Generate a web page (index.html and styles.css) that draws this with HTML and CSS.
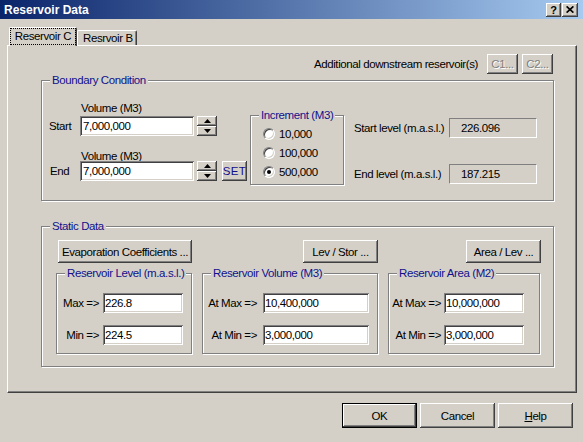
FILE: index.html
```html
<!DOCTYPE html>
<html>
<head>
<meta charset="utf-8">
<title>Reservoir Data</title>
<link rel="stylesheet" href="styles.css">
</head>
<body>
<div class="titlebar">
  <span class="title">Reservoir Data</span>
  <div class="tb-buttons">
    <span class="tb-btn tb-help">?</span>
    <span class="tb-btn tb-close"><svg width="8" height="7" viewBox="0 0 8 7"><path d="M0.6 0.4 L7.4 6.6 M7.4 0.4 L0.6 6.6" stroke="#000" stroke-width="1.7" fill="none"/></svg></span>
  </div>
</div>
<div class="client">
  <div class="tabs">
    <div class="tab active"><span class="focus">Reservoir C</span></div>
    <div class="tab">Resrvoir B</div>
  </div>
  <div class="panel">
    <div class="row-add">
      <span class="add-label">Additional downstream reservoir(s)</span>
      <button class="btn disabled cbtn">C1...</button>
      <button class="btn disabled cbtn">C2...</button>
    </div>

    <div class="group boundary">
      <span class="legend">Boundary Condition</span>
      <div class="bc-body">
        <div class="bc-vol">
          <div class="vol-label first">Volume (M3)</div>
          <div class="field-row">
            <span class="side-label">Start</span>
            <input class="field vol-field" type="text" value="7,000,000">
            <div class="spin">
              <span class="spin-btn"><svg width="7" height="4" viewBox="0 0 7 4"><polygon points="3.5,0 7,4 0,4" fill="#000"/></svg></span>
              <span class="spin-btn"><svg width="7" height="4" viewBox="0 0 7 4"><polygon points="0,0 7,0 3.5,4" fill="#000"/></svg></span>
            </div>
          </div>
          <div class="vol-label second">Volume (M3)</div>
          <div class="field-row end-row">
            <span class="side-label end-label">End</span>
            <input class="field vol-field" type="text" value="7,000,000">
            <div class="spin">
              <span class="spin-btn"><svg width="7" height="4" viewBox="0 0 7 4"><polygon points="3.5,0 7,4 0,4" fill="#000"/></svg></span>
              <span class="spin-btn"><svg width="7" height="4" viewBox="0 0 7 4"><polygon points="0,0 7,0 3.5,4" fill="#000"/></svg></span>
            </div>
            <button class="btn set">SET</button>
          </div>
        </div>

        <div class="group increment">
          <span class="legend">Increment (M3)</span>
          <div class="radios">
            <div class="radio-row"><span class="radio"></span><span>10,000</span></div>
            <div class="radio-row"><span class="radio"></span><span>100,000</span></div>
            <div class="radio-row"><span class="radio checked"></span><span>500,000</span></div>
          </div>
        </div>

        <div class="levels">
          <div class="level-row"><span class="level-label">Start level (m.a.s.l.)</span><div class="static">226.096</div></div>
          <div class="level-row second"><span class="level-label">End level (m.a.s.l.)</span><div class="static">187.215</div></div>
        </div>
      </div>
    </div>

    <div class="group static-data">
      <span class="legend">Static Data</span>
      <div class="sd-buttons">
        <button class="btn evap">Evaporation Coefficients ...</button>
        <button class="btn levstor">Lev / Stor ...</button>
        <button class="btn arealev">Area / Lev ...</button>
      </div>
      <div class="sd-groups">
        <div class="group sub sub-level">
          <span class="legend">Reservoir Level (m.a.s.l.)</span>
          <div class="sub-grid">
            <span class="sub-label">Max =&gt;</span><input class="field" type="text" value="226.8">
            <span class="sub-label">Min =&gt;</span><input class="field" type="text" value="224.5">
          </div>
        </div>
        <div class="group sub sub-volume">
          <span class="legend">Reservoir Volume (M3)</span>
          <div class="sub-grid">
            <span class="sub-label">At Max =&gt;</span><input class="field" type="text" value="10,400,000">
            <span class="sub-label">At Min =&gt;</span><input class="field" type="text" value="3,000,000">
          </div>
        </div>
        <div class="group sub sub-area">
          <span class="legend">Reservoir Area (M2)</span>
          <div class="sub-grid">
            <span class="sub-label">At Max =&gt;</span><input class="field" type="text" value="10,000,000">
            <span class="sub-label">At Min =&gt;</span><input class="field" type="text" value="3,000,000">
          </div>
        </div>
      </div>
    </div>
  </div>

  <div class="dialog-buttons">
    <button class="btn dlg default">OK</button>
    <button class="btn dlg">Cancel</button>
    <button class="btn dlg"><span class="u">H</span>elp</button>
  </div>
</div>
</body>
</html>
```

FILE: styles.css
```css
* { box-sizing: border-box; }
html, body { margin: 0; padding: 0; }
body {
  width: 583px;
  height: 442px;
  overflow: hidden;
  background: #d4d0c8;
  font-family: "Liberation Sans", Arial, sans-serif;
  font-size: 11.5px;
  letter-spacing: -0.4px;
  line-height: 14px;
  color: #000;
  white-space: nowrap;
}

/* title bar */
.titlebar {
  height: 19px;
  background: linear-gradient(to right, #0a246a, #a6caf0);
  display: flex;
  align-items: center;
  justify-content: space-between;
  padding: 0 5px 0 4px;
}
.title {
  font-weight: bold;
  font-size: 12px;
  letter-spacing: 0;
  color: #fff;
}
.tb-buttons { display: flex; gap: 1px; }
.tb-btn {
  width: 16px;
  height: 14px;
  background: #d4d0c8;
  box-shadow: inset -1px -1px #404040, inset 1px 1px #fff, inset -2px -2px #808080;
  display: flex;
  align-items: center;
  justify-content: center;
  font-weight: bold;
  font-size: 11px;
  letter-spacing: 0;
  line-height: 12px;
}
.tb-help { width: 15px; }

/* client */
.client { padding: 8px 0 0 7px; }
.tabs {
  display: flex;
  align-items: flex-end;
  height: 18px;
  margin-left: 2px;
}
.tab {
  height: 15px;
  width: 60px;
  padding-left: 5px;
  display: flex;
  align-items: center;
  border-top: 1px solid #fff;
  border-left: 1px solid #fff;
  border-right: 1px solid #404040;
  border-radius: 2px 2px 0 0;
  box-shadow: inset -1px 0 #808080;
}
.tab.active {
  position: relative;
  z-index: 1;
  height: 19px;
  width: 68px;
  margin-bottom: -1px;
  padding-left: 0;
  justify-content: center;
  background: #d4d0c8;
}
.focus {
  outline: 1px dotted #000;
  padding: 0 4px;
  line-height: 15px;
  margin-top: -1px;
}

.panel {
  width: 570px;
  height: 348px;
  border-top: 1px solid #fff;
  border-left: 1px solid #fff;
  border-right: 1px solid #404040;
  border-bottom: 1px solid #404040;
  box-shadow: inset -1px -1px #808080;
}

/* buttons */
.btn {
  font: inherit;
  letter-spacing: inherit;
  line-height: 14px;
  white-space: nowrap;
  color: #000;
  background: #d4d0c8;
  border: none;
  padding: 0;
  margin: 0;
  box-shadow: inset -1px -1px #404040, inset 1px 1px #fff, inset -2px -2px #808080;
  display: flex;
  align-items: center;
  justify-content: center;
}
.btn.disabled {
  color: #808080;
  text-shadow: 1px 1px #fff;
}
.btn.default {
  box-shadow: inset 0 0 0 1px #000, inset -2px -2px #404040, inset 2px 2px #fff, inset -3px -3px #808080;
}
.u { text-decoration: underline; }

.row-add {
  display: flex;
  align-items: center;
  justify-content: flex-end;
  gap: 4px;
  height: 20px;
  margin: 8px 23px 0 0;
}
.add-label { margin-right: 5px; }
.cbtn { width: 31px; height: 20px; }

/* groups */
.group {
  border: 1px solid #808080;
  box-shadow: inset 1px 1px #fff, 1px 1px #fff;
}
.legend {
  display: block;
  width: max-content;
  height: 14px;
  margin: -8px 0 0 8px;
  padding: 0 2px;
  background: #d4d0c8;
  color: #10108c;
  line-height: 14px;
}

.boundary {
  width: 513px;
  height: 121px;
  margin: 6px 0 0 33px;
}
.bc-body { display: flex; align-items: flex-start; }
.bc-vol { width: 198px; margin-left: 7px; flex: none; }
.vol-label { height: 14px; padding-left: 32px; }
.vol-label.first { margin-top: 14px; }
.vol-label.second { margin-top: 13px; }
.field-row {
  display: flex;
  align-items: center;
  height: 20px;
  margin-top: 1px;
}
.field-row.end-row { margin-top: -2px; }
.side-label { width: 31px; flex: none; }
.end-label { padding-left: 1px; }

.field {
  font: inherit;
  letter-spacing: inherit;
  color: #000;
  height: 20px;
  border: none;
  outline: none;
  margin: 0;
  padding: 0 0 0 2px;
  background: #fff;
  box-shadow: inset 1px 1px #808080, inset -1px -1px #fff, inset 2px 2px #404040, inset -2px -2px #d4d0c8;
}
.vol-field { width: 114px; padding-left: 3px; flex: none; }

.spin {
  display: flex;
  flex-direction: column;
  width: 20px;
  height: 20px;
  margin-left: 3px;
  flex: none;
}
.spin-btn {
  flex: 1;
  display: flex;
  align-items: center;
  justify-content: center;
  background: #d4d0c8;
  box-shadow: inset -1px -1px #404040, inset 1px 1px #fff, inset -2px -2px #808080;
}
.spin-btn svg { display: block; }
.set {
  width: 25px;
  height: 20px;
  margin-left: 5px;
  flex: none;
  color: #10108c;
  letter-spacing: 0.4px;
}

.increment {
  width: 94px;
  height: 70px;
  margin: 28px 0 0 3px;
  flex: none;
}
.radios { margin-top: 2px; }
.radio-row {
  display: flex;
  align-items: center;
  gap: 4px;
  height: 19px;
  padding-left: 12px;
}
.radio {
  position: relative;
  flex: none;
  width: 12px;
  height: 12px;
  border-radius: 50%;
  background: #fff;
  border: 1px solid;
  border-color: #808080 #fff #fff #808080;
  box-shadow: inset 1px 1px #404040, inset -1px -1px #d4d0c8;
}
.radio.checked::after {
  content: "";
  position: absolute;
  left: 3px;
  top: 3px;
  width: 4px;
  height: 4px;
  border-radius: 50%;
  background: #000;
}

.levels { margin: 31px 0 0 10px; flex: none; }
.level-row { display: flex; align-items: center; height: 20px; }
.level-row.second { margin-top: 26px; }
.level-label { width: 95px; flex: none; }
.static {
  width: 88px;
  height: 20px;
  padding-left: 11px;
  display: flex;
  align-items: center;
  border-top: 1px solid #808080;
  border-left: 1px solid #808080;
  border-bottom: 1px solid #fff;
  border-right: 1px solid #fff;
}

/* static data */
.static-data {
  width: 513px;
  height: 141px;
  margin: 25px 0 0 33px;
}
.sd-buttons { display: flex; height: 23px; margin-top: 7px; }
.sd-buttons .btn { height: 23px; flex: none; }
.evap { width: 134px; margin-left: 16px; }
.levstor { width: 75px; margin-left: 111px; }
.arealev { width: 75px; margin-left: 88px; }

.sd-groups { display: flex; align-items: flex-start; margin-top: 10px; }
.sub { height: 81px; flex: none; }
.sub-level { width: 136px; margin-left: 14px; }
.sub-volume { width: 176px; margin-left: 10px; }
.sub-area { width: 152px; margin-left: 10px; }

.sub-grid {
  display: grid;
  row-gap: 12px;
  margin-top: 13px;
  align-items: center;
}
.sub-label { justify-self: end; }
.sub-level .sub-grid { grid-template-columns: 42px 80px; column-gap: 4px; }
.sub-volume .sub-grid { grid-template-columns: 54px 106px; column-gap: 6px; }
.sub-area .sub-grid { grid-template-columns: 52px 80px; column-gap: 3px; }
.sub-grid .field { width: 100%; }

/* dialog buttons */
.dialog-buttons {
  display: flex;
  justify-content: flex-end;
  gap: 3px;
  margin: 10px 10px 0 0;
}
.dlg { width: 75px; height: 25px; }
```
